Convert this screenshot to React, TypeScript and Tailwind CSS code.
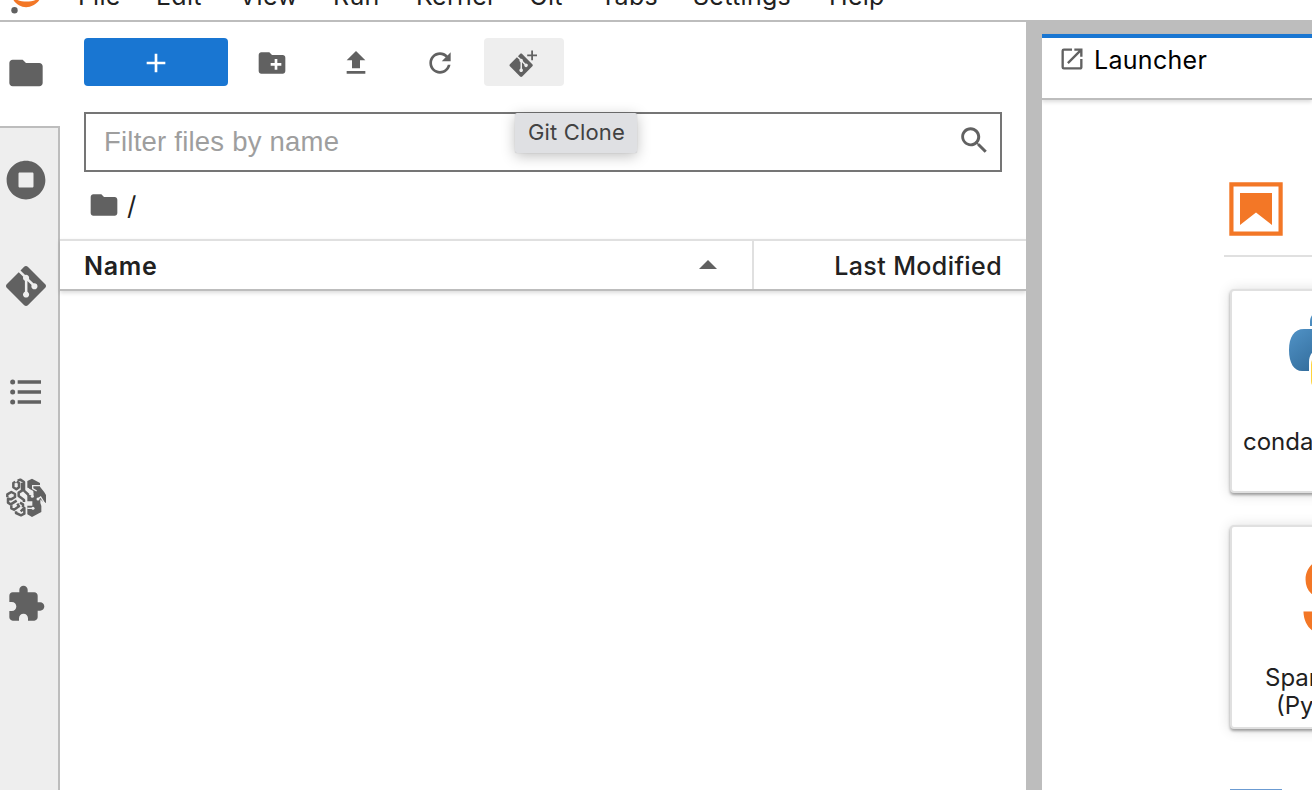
import type { ReactNode } from "react";

type IconProps = { d: string; className?: string; viewBox?: string };

function Icon({ d, className = "size-8", viewBox = "0 0 24 24" }: IconProps) {
  return (
    <svg viewBox={viewBox} className={`shrink-0 ${className}`} fill="currentColor">
      <path d={d} />
    </svg>
  );
}

const FOLDER =
  "M10 4H4c-1.1 0-1.99.9-1.99 2L2 18c0 1.1.9 2 2 2h16c1.1 0 2-.9 2-2V8c0-1.1-.9-2-2-2h-8l-2-2z";
const NEW_FOLDER =
  "M20 6h-8l-2-2H4c-1.11 0-1.99.89-1.99 2L2 18c0 1.11.89 2 2 2h16c1.11 0 2-.89 2-2V8c0-1.11-.89-2-2-2zm-1 8h-3v3h-2v-3h-3v-2h3V9h2v3h3v2z";
const UPLOAD = "M9 16h6v-6h4l-7-7-7 7h4zm-4 2h14v2H5z";
const REFRESH =
  "M9 13.5c-2.49 0-4.5-2.01-4.5-4.5S6.51 4.5 9 4.5c1.24 0 2.36.52 3.17 1.33L10 8h5V3l-1.76 1.76C12.15 3.68 10.66 3 9 3 5.69 3 3.01 5.69 3.01 9S5.69 15 9 15c2.97 0 5.43-2.16 5.9-5h-1.52c-.46 2-2.24 3.5-4.38 3.5z";
const GIT =
  "M23.546 10.93L13.067.452c-.604-.603-1.582-.603-2.188 0L8.708 2.627l2.76 2.76c.645-.215 1.379-.07 1.889.441.516.515.658 1.258.438 1.9l2.658 2.66c.645-.223 1.387-.078 1.9.435.721.72.721 1.884 0 2.604-.719.719-1.881.719-2.6 0-.539-.541-.674-1.337-.404-1.996L12.86 8.955v6.525c.176.086.342.203.488.348.713.721.713 1.883 0 2.6-.719.721-1.889.721-2.609 0-.719-.719-.719-1.879 0-2.598.182-.18.387-.316.605-.406V8.835c-.217-.091-.424-.222-.6-.401-.545-.545-.676-1.342-.396-2.009L7.636 3.7.45 10.881c-.6.605-.6 1.584 0 2.189l10.48 10.477c.604.604 1.582.604 2.186 0l10.43-10.43c.605-.603.605-1.582 0-2.187";
const RUNNING =
  "M256 8C119 8 8 119 8 256s111 248 248 248 248-111 248-248S393 8 256 8zm96 328c0 8.8-7.2 16-16 16H176c-8.8 0-16-7.2-16-16V176c0-8.8 7.2-16 16-16h160c8.800 0 16 7.2 16 16v160z";
const TOC =
  "M7 5h14v2H7zM7 11h14v2H7zM7 17h14v2H7zM4 4.5a1.5 1.5 0 1 1 0 3 1.5 1.5 0 0 1 0-3zM4 10.500a1.5 1.5 0 1 1 0 3 1.5 1.5 0 0 1 0-3zM4 16.500a1.5 1.5 0 1 1 0 3 1.5 1.5 0 0 1 0-3z";
const EXTENSION =
  "M20.5 11H19V7c0-1.1-.9-2-2-2h-4V3.500C13 2.12 11.88 1 10.5 1S8 2.12 8 3.500V5H4c-1.1 0-1.99.9-1.99 2v3.800H3.500c1.49 0 2.7 1.21 2.7 2.7s-1.21 2.7-2.7 2.7H2V20c0 1.1.9 2 2 2h3.800v-1.500c0-1.49 1.21-2.7 2.7-2.7 1.49 0 2.7 1.21 2.7 2.7V22H17c1.1 0 2-.9 2-2v-4h1.500c1.38 0 2.5-1.12 2.5-2.5S21.880 11 20.500 11z";
const SEARCH =
  "M12.100 10.900h-.7l-.2-.2c.8-.9 1.300-2.200 1.300-3.500 0-3-2.400-5.400-5.400-5.400S1.800 4.200 1.800 7.100s2.400 5.400 5.400 5.400c1.300 0 2.500-.5 3.500-1.300l.2.2v.7l4.100 4.100 1.200-1.200-4.100-4.100zm-5 0c-2.100 0-3.700-1.700-3.700-3.700s1.700-3.700 3.700-3.700 3.700 1.700 3.700 3.700-1.600 3.700-3.700 3.700z";
const LAUNCHER =
  "M19 19H5V5h7V3H5a2 2 0 0 0-2 2v14a2 2 0 0 0 2 2h14c1.100 0 2-.9 2-2v-7h-2v7zM14 3v2h3.590l-9.830 9.830 1.410 1.410L19 6.410V10h2V3h-7z";

function BrainIcon() {
  return (
    <svg viewBox="18 22 120 120" className="size-10 shrink-0" fill="none">
      <g stroke="#616161" strokeWidth="7.500" strokeLinejoin="round">
        <path d="M46 33 40 37V50L49 56 57 50V37L50 33" />
        <path d="M53 30 61 27 72 34V60L86 73" />
        <path d="M66 36V60L56 66V76L72 88V94" />
        <path d="M22 80V71L34 64 45 70V79L33 86 24 84V96L32 101 50 90" />
        <path d="M34 104V113L42 117 57 107 52 99" />
        <path d="M48 122V127L63 134 73 129V112L62 122" />
        <path d="M60 96 69 101V110" />
      </g>
      <path
        d="M82 31 96 24 120 37V48L133 65 138 73V97L127 92 121 86V97L124 106V124L96 139 82 131V105L97 105V92L82 92V70L91 74 100 72V61L82 51Z"
        fill="#616161"
      />
      <g stroke="#eeeeee" strokeWidth="4">
        <path d="M121 45H98V54L110 61" />
        <path d="M82 52 98 67V76" />
        <path d="M112 86 122 79 134 98" />
        <path d="M82 113H99" />
      </g>
      <circle cx="97" cy="77" r="4.500" fill="#eeeeee" />
      <circle cx="114" cy="85" r="4.500" fill="#eeeeee" />
      <circle cx="99" cy="113" r="4.500" fill="#eeeeee" />
    </svg>
  );
}

function MenuItem({ className, children }: { className: string; children: ReactNode }) {
  return <span className={`shrink-0 ${className}`}>{children}</span>;
}

function MenuBar() {
  return (
    <header className="flex h-[22px] shrink-0 overflow-hidden border-b-2 border-[#bdbdbd]">
      <svg viewBox="0 0 78 20" className="h-5 w-[78px] shrink-0">
        <path d="M12 -3C17 10.500 35 10.500 41 -3C34 3 19 3 12 -3Z" fill="#f37726" />
        <circle cx="14.500" cy="10.200" r="3.200" fill="#616161" />
      </svg>
      <div className="-mt-5 flex h-8 text-[25px] leading-8 tracking-[0.300px] text-[#212121]">
        <MenuItem className="w-[78px]">File</MenuItem>
        <MenuItem className="w-[83px]">Edit</MenuItem>
        <MenuItem className="w-[94px]">View</MenuItem>
        <MenuItem className="w-[83px]">Run</MenuItem>
        <MenuItem className="w-[113px]">Kernel</MenuItem>
        <MenuItem className="w-[71px]">Git</MenuItem>
        <MenuItem className="w-[93px]">Tabs</MenuItem>
        <MenuItem className="w-[136px]">Settings</MenuItem>
        <MenuItem className="w-[80px]">Help</MenuItem>
      </div>
    </header>
  );
}

function Sidebar() {
  return (
    <nav className="flex w-[60px] shrink-0 flex-col text-[#616161]">
      <div className="h-[104px] pt-[31px] pl-1.5">
        <Icon d={FOLDER} className="size-10" />
      </div>
      <div className="flex grow flex-col gap-[66px] border-t-2 border-r-2 border-[#bdbdbd] bg-[#eeeeee] pt-8 pl-1.5">
        <Icon d={RUNNING} viewBox="0 0 512 512" className="size-10" />
        <Icon d={GIT} className="size-10" />
        <Icon d={TOC} className="size-10" />
        <BrainIcon />
        <Icon d={EXTENSION} className="size-10" />
      </div>
    </nav>
  );
}

function Toolbar() {
  return (
    <div className="flex h-12 text-[#616161]">
      <button className="flex h-12 w-36 items-center justify-center rounded bg-[#1976d2] text-white">
        <Icon d="M19 13h-6v6h-2v-6H5v-2h6V5h2v6h6v2z" className="mt-0.5 size-8" />
      </button>
      <div className="ml-1 flex w-20 items-center justify-center pt-0.5">
        <Icon d={NEW_FOLDER} />
      </div>
      <div className="ml-1 flex w-20 items-center justify-center pt-0.5">
        <Icon d={UPLOAD} />
      </div>
      <div className="ml-1 flex w-20 items-center justify-center pt-0.5">
        <Icon d={REFRESH} viewBox="0 0 18 18" />
      </div>
      <div className="relative ml-1 flex w-20 justify-center rounded bg-[#eeeeee]">
        <svg viewBox="0 0 32 32" className="mt-[9px] size-8" fill="currentColor">
          <path d={GIT} transform="translate(1.500 6.600) scale(.97)" />
          <path d="M23.200 3.500h1.800v4h4v1.800h-4v4h-1.800v-4h-4V7.500h4z" />
        </svg>
        <div className="absolute top-[75px] left-[31px] z-10 h-10 w-[122px] rounded-[2px] bg-[#dfe0e3] pl-[13px] text-[22px] leading-[39px] tracking-[0.150px] whitespace-nowrap text-[#424242] shadow-[0_0_1px_0_rgba(0,0,0,0.25),0_3px_14px_rgba(0,0,0,0.25)]">
          Git Clone
        </div>
      </div>
    </div>
  );
}

function FileBrowser() {
  return (
    <section className="flex w-[966px] shrink-0 flex-col">
      <div className="px-6 pt-4">
        <Toolbar />
        <div className="mt-[26px] flex h-[60px] justify-between border-2 border-[#757575] pl-[18px]">
          <span className="font-['Liberation_Sans',sans-serif] text-[27.500px] leading-[55px] tracking-[0.220px] text-[#9e9e9e]">
            Filter files by name
          </span>
          <Icon d={SEARCH} viewBox="0 0 18 18" className="mt-[10px] mr-2.5 size-8 text-[#616161]" />
        </div>
      </div>
      <div className="flex h-[67px] items-center pl-7 text-[#616161]">
        <Icon d={FOLDER} className="-mt-0.5 size-8" />
        <span className="ml-[7px] text-[26px] text-[#212121]">/</span>
      </div>
      <div className="flex h-[52px] shrink-0 border-t-2 border-b-2 border-t-[#e0e0e0] border-b-[#bdbdbd] text-[25px] leading-[50px] text-[#212121] shadow-[0_2px_4px_rgba(0,0,0,0.14)]">
        <div className="flex w-[694px] justify-between border-r-2 border-[#e0e0e0] pl-6 font-semibold tracking-[0.700px]">
          Name
          <svg viewBox="0 0 18 9" className="mt-[19px] mr-[35px] h-[9px] w-[18px]" fill="#616161">
            <path d="M0 9 9 0l9 9z" />
          </svg>
        </div>
        <div className="grow pr-6 text-right font-medium tracking-[0.400px]">Last Modified</div>
      </div>
    </section>
  );
}

function Card({ className, icon, children }: { className: string; icon: ReactNode; children: ReactNode }) {
  return (
    <div
      className={`flex h-[204px] w-[204px] shrink-0 flex-col rounded border-2 border-[#e0e0e0] bg-white text-[24px] leading-7 text-[#212121] shadow-[0_2px_3px_rgba(0,0,0,0.35),0_1px_14px_rgba(0,0,0,0.14)] ${className}`}
    >
      <div className="h-[137px] shrink-0">{icon}</div>
      <div className="whitespace-nowrap">{children}</div>
    </div>
  );
}

function PythonLogo() {
  return (
    <svg viewBox="0 0 104 104" className="mt-[14px] ml-[50px] size-[104px]">
      <defs>
        <linearGradient id="blue" x1="0" y1="0" x2="0.700" y2="0.800">
          <stop offset="0" stopColor="#5a9fd4" />
          <stop offset="1" stopColor="#306998" />
        </linearGradient>
      </defs>
      <path
        d="M51 5C36 5 28 7 28 17V21H52V24H22C12 24 7 32 7 45S12 66 20 66H27V57C27 49 32 43 41 43H62C69 43 74 37 74 30V17C74 8 65 5 51 5Z"
        fill="url(#blue)"
      />
      <path
        d="M78 25V35C78 43 72 47 65 47H42C34 47 29 53 29 60V76C29 84 39 88 52 88S74 84 74 76V69H52V66H83C92 66 97 60 97 46S92 25 83 25Z"
        fill="#ffd43b"
      />
    </svg>
  );
}

function Launcher() {
  return (
    <main className="flex min-w-0 grow flex-col overflow-hidden">
      <div className="h-3 shrink-0 bg-[#bdbdbd]" />
      <div className="flex h-[66px] shrink-0 border-t-4 border-b-2 border-t-[#1976d2] border-b-[#bdbdbd] pl-4 shadow-[0_2px_4px_rgba(0,0,0,0.14)]">
        <Icon d={LAUNCHER} className="mt-[7px] size-7 text-[#616161]" />
        <span className="ml-2 text-[25px] leading-[44px] tracking-[0.300px] text-black">Launcher</span>
      </div>
      <div className="flex grow flex-col overflow-hidden pt-[82px] pl-[182px]">
        <div className="h-[75px] shrink-0 border-b-2 border-[#e0e0e0] pl-[5px]">
          <svg viewBox="0 0 54 54" className="size-[54px]" fill="#f37726">
            <path d="M.300.300h53.400v53.400H.300zM4.500 4.500v45h45v-45z" fillRule="evenodd" />
            <path d="M11 11h32v32L27 30.500 11 43z" />
          </svg>
        </div>
        <Card className="mt-[32px] ml-1.5" icon={<PythonLogo />}>
          <div className="pl-[11px]">conda_python3</div>
        </Card>
        <Card
          className="mt-8 ml-1.5"
          icon={
            <div className="pt-[18px] pl-[67px] text-[108px] leading-[104px] font-bold text-[#f37726]">S</div>
          }
        >
          <div className="pl-[33px]">SparkMagic</div>
          <div className="pl-[44px]">(PySpark)</div>
        </Card>
        <div className="mt-[60px] ml-1.5 size-[52px] shrink-0 bg-[#6b9bd2]" />
      </div>
    </main>
  );
}

export default function App() {
  return (
    <div className="flex h-[790px] w-[1312px] flex-col overflow-hidden bg-white font-['Inter',sans-serif]">
      <MenuBar />
      <div className="flex min-h-0 grow">
        <Sidebar />
        <FileBrowser />
        <div className="-mt-0.5 w-4 shrink-0 bg-[#bdbdbd]" />
        <Launcher />
      </div>
    </div>
  );
}
